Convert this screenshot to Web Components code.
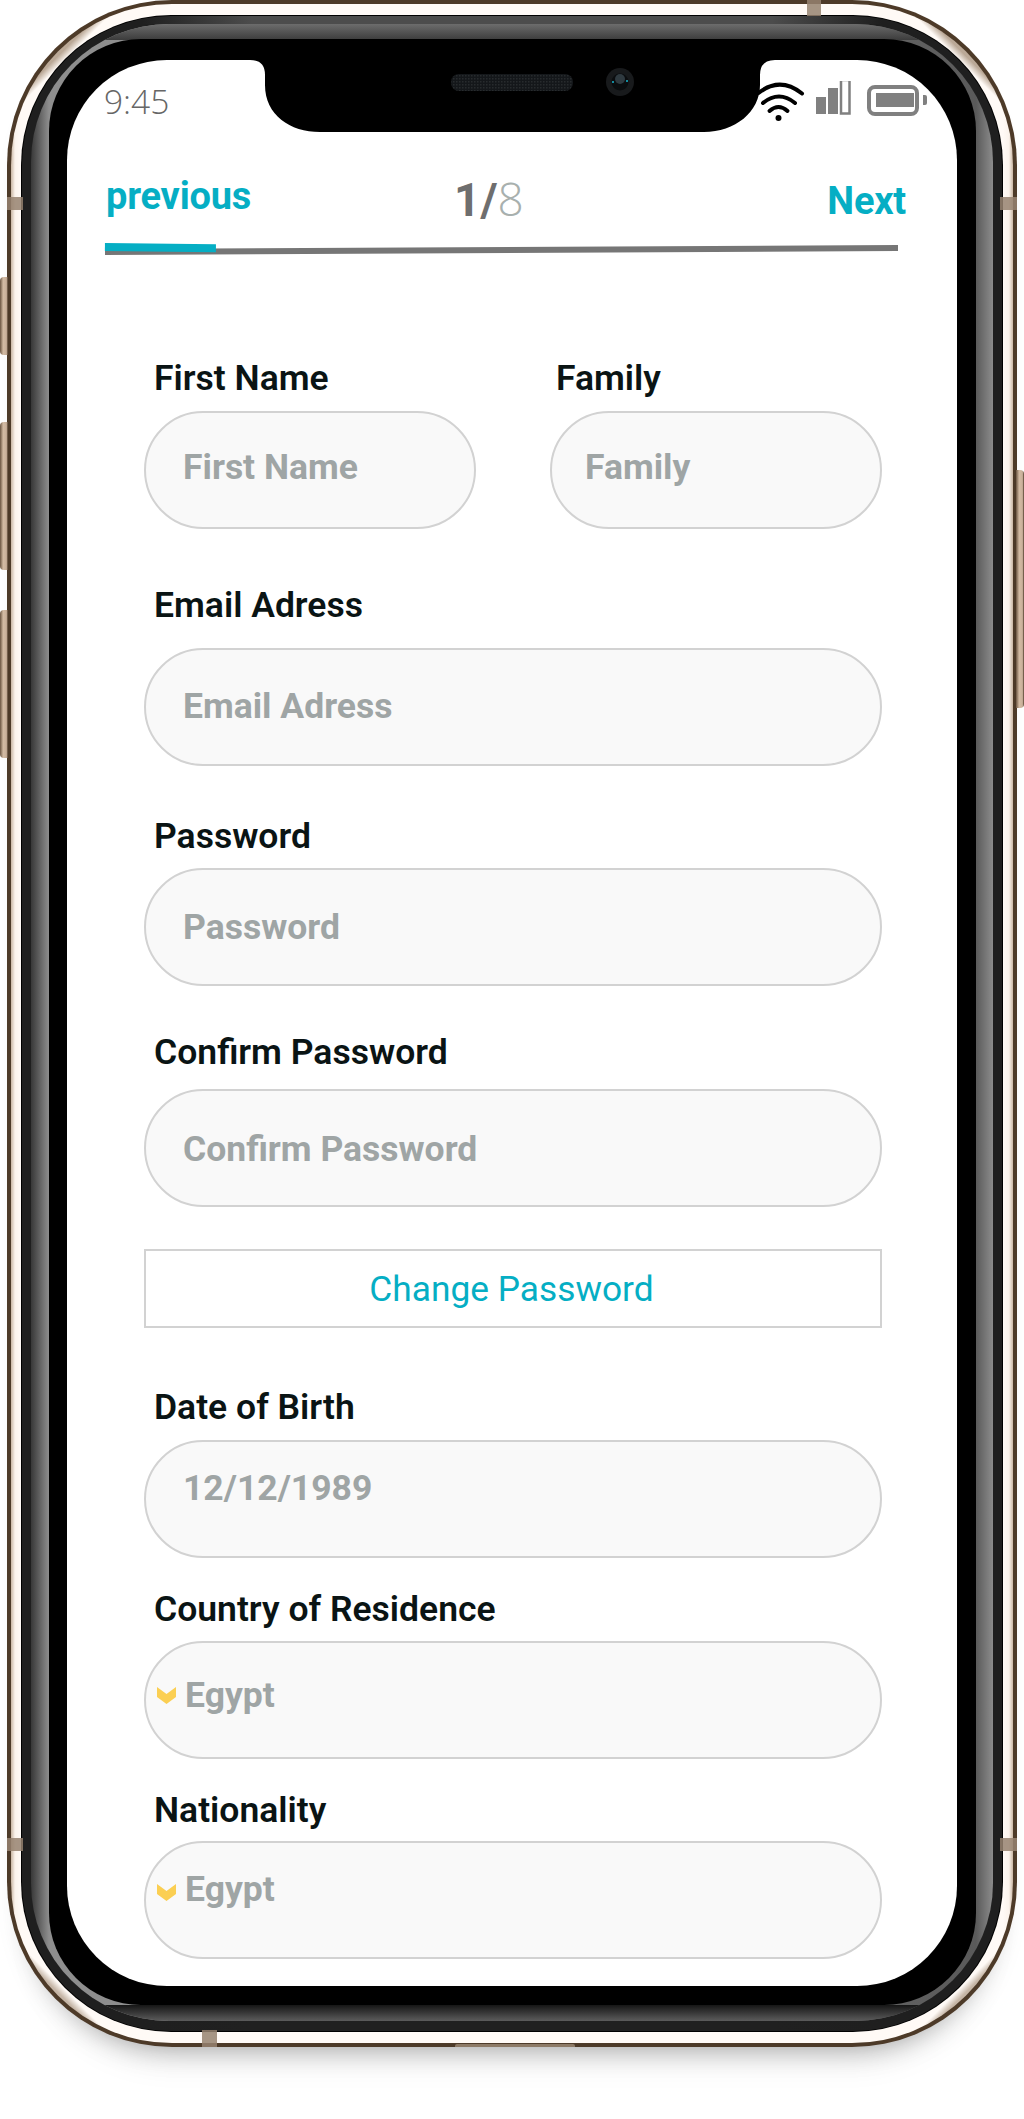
<!DOCTYPE html>
<html lang="en"><head><meta charset="utf-8"><title>Sign up</title>
<style>
html,body{margin:0;padding:0;background:#fff}
body{width:1024px;height:2119px;overflow:hidden;font-family:Roboto,"Liberation Sans",sans-serif}
.rows{display:flex;gap:74px}
</style></head><body>
<phone-frame>
  <status-bar></status-bar>
  <step-nav prev="previous" next="Next" current="1" total="8"></step-nav>
  <form-panel>
    <div class="rows">
      <form-field label="First Name" value="First Name" w="332" g="13" lx="10" px="37" pt="34"></form-field>
      <form-field label="Family" value="Family" w="332" g="13" lx="6" px="33" pt="34"></form-field>
    </div>
    <form-field label="Email Adress" value="Email Adress" w="738" mt="56" g="23" lx="10" px="37" pt="36"></form-field>
    <form-field label="Password" value="Password" w="738" mt="50" g="12" lx="10" px="37" pt="37"></form-field>
    <form-field label="Confirm Password" value="Confirm Password" w="738" mt="46" g="17" lx="10" px="37" pt="38"></form-field>
    <action-button>Change Password</action-button>
    <form-field label="Date of Birth" value="12/12/1989" w="738" mt="59" g="13" lx="10" px="37" pt="26"></form-field>
    <form-field label="Country of Residence" value="Egypt" select w="738" mt="31" g="12" lx="10" px="39" pt="32" cy="12"></form-field>
    <form-field label="Nationality" value="Egypt" select w="738" mt="31" g="11" lx="10" px="39" pt="26" cy="15"></form-field>
  </form-panel>
</phone-frame>
<script>
const tpl = html => { const t=document.createElement('template'); t.innerHTML=html; return t; };
class Base extends HTMLElement{
  mount(t){ this.attachShadow({mode:'open'}).appendChild(t.content.cloneNode(true)); }
}
const phoneT = tpl(`<style>
:host{display:block;position:relative;margin-left:7px;width:1010px}
.rim{position:relative;background:#4d3a28;padding:4px;border-radius:165px;box-shadow:0 22px 30px -24px rgba(0,0,0,.38),0 44px 36px -34px rgba(0,0,0,.1)}
.cream{padding:11px 10px 11px 10px;border-radius:161px;background:
 linear-gradient(135deg,transparent 56px,rgba(150,125,100,.65) 63px,rgba(150,125,100,.65) 70px,transparent 78px),
 linear-gradient(225deg,transparent 56px,rgba(150,125,100,.65) 63px,rgba(150,125,100,.65) 70px,transparent 78px),
 linear-gradient(45deg,transparent 58px,rgba(150,125,100,.55) 64px,rgba(150,125,100,.55) 69px,transparent 76px),
 linear-gradient(315deg,transparent 58px,rgba(150,125,100,.55) 64px,rgba(150,125,100,.55) 69px,transparent 76px),
 linear-gradient(90deg,#c9b6a3 0,#fbf3ec 4px,#fffaf6 10px,#fffaf6 calc(100% - 10px),#fbf3ec calc(100% - 4px),#c9b6a3 100%)}
.line{padding:1px;border-radius:150px;background:#000}
.dark{padding:8px 9px 10px 9px;border-radius:149px;background:
 linear-gradient(90deg,#1f1f1f 120px,transparent 230px,transparent calc(100% - 230px),#1f1f1f calc(100% - 120px)),
 linear-gradient(#4c4c4c 8px,#202020 8px)}
.grad{position:relative;overflow:hidden;padding:15px 17px 16px 18px;border-radius:138px;background:linear-gradient(90deg,#383838 0,#8e8e8e 18px,#8e8e8e 30%,#5a5a5a calc(100% - 17px),#8c8c8c 100%)}
.grad::before,.grad::after{content:"";position:absolute;left:0;right:0;height:16px}
.grad::before{top:0;background:linear-gradient(#6c6c6c,#3c3c3c);clip-path:polygon(40px 0,calc(100% - 40px) 0,calc(100% - 66px) 100%,68px 100%)}
.grad::after{bottom:0;background:linear-gradient(#161616,#5c5c5c);clip-path:polygon(68px 0,calc(100% - 66px) 0,calc(100% - 40px) 100%,40px 100%)}
.black{position:relative;z-index:1;background:#000;padding:21px 19px 19px 18px;border-radius:92px}
.screen{position:relative;background:#fff;border-radius:100px;overflow:hidden;height:1926px}
.notch{position:absolute;left:0;top:0;display:block}
.btn{position:absolute;width:8px;background:linear-gradient(90deg,#6a5440,#d3bba3 40%,#c9b09a 80%,#4d3a28);border-radius:3px}
.l{left:-7px;border-radius:4px 0 0 4px}.r{right:-7px;border-radius:0 4px 4px 0}
.band{position:absolute;background:rgba(150,130,112,.85)}
.slit{position:absolute;left:448px;width:120px;bottom:0;height:3px;border-radius:2px 2px 0 0;background:#8d7a66}
</style>
<div class="rim">
 <div class="cream"><div class="line"><div class="dark"><div class="grad"><div class="black"><div class="screen">
  <svg class="notch" width="889" height="80" viewBox="67 60 889 80"><defs><pattern id="mesh" width="3" height="3" patternUnits="userSpaceOnUse"><rect width="3" height="3" fill="#14171a"/><rect width="1.500" height="1.500" fill="#272b2d"/></pattern></defs><path fill="#000" d="M250,60Q265,60 265,75L265,85C265,115 290,132 320,132L704,132C735,132 760,112 760,85L760,75Q760,60 775,60Z"/><rect x="451" y="74" width="122" height="17" rx="8" fill="url(#mesh)"/><circle cx="620" cy="82" r="14" fill="#181a1c"/><circle cx="620" cy="82" r="8.500" fill="#0b0d0f"/><circle cx="620" cy="79" r="5" fill="#2f3a40"/><circle cx="613" cy="82" r="1" fill="#17b6cf"/><circle cx="627" cy="81" r="1" fill="#17b6cf"/></svg>
  <slot></slot>
 </div></div></div></div></div></div>
 <i class="band" style="left:0;top:197px;width:16px;height:13px"></i>
 <i class="band" style="right:0;top:197px;width:17px;height:13px"></i>
 <i class="band" style="left:800px;top:0;width:14px;height:16px"></i>
 <i class="band" style="left:195px;bottom:0;width:15px;height:17px"></i>
 <i class="band" style="left:0;top:1838px;width:16px;height:13px"></i>
 <i class="band" style="right:0;top:1838px;width:17px;height:13px"></i>
 <i class="slit"></i>
</div>
<i class="btn l" style="top:277px;height:78px"></i>
<i class="btn l" style="top:422px;height:148px"></i>
<i class="btn l" style="top:610px;height:148px"></i>
<i class="btn r" style="top:470px;height:238px"></i>`);
customElements.define('phone-frame',class extends Base{constructor(){super();this.mount(phoneT)}});

const statusT = tpl(`<style>
:host{display:flex;position:relative;z-index:1;height:59px;align-items:flex-start;padding:0 29px 0 37px}
.t{font:300 33.500px/38px "Open Sans",sans-serif;color:#666;margin-top:22px}
.icons{margin-left:auto;display:flex;margin-top:21px}
svg{display:block}
</style>
<span class="t">9:45</span>
<div class="icons">
<svg width="171" height="44" viewBox="758 84 171 44" fill="none">
 <g stroke="#000" stroke-width="4" stroke-linecap="round"><path d="M759.500,96Q781,79 803,96.500"/><path d="M764,106Q780,93 796,106"/><path d="M770.500,114Q779.500,106 788.500,114"/></g><circle cx="779.500" cy="121" r="3" fill="#000"/>
 <g fill="#808080"><rect x="817" y="100" width="10" height="17"/><rect x="829" y="91" width="10" height="26"/></g>
 <rect x="842" y="83" width="8.500" height="33.500" stroke="#808080" stroke-width="2.500"/>
 <rect x="870" y="90" width="48" height="27" rx="6" stroke="#808080" stroke-width="4"/>
 <rect x="877" y="96" width="38" height="14" fill="#808080"/>
 <path d="M924,98h2a2,2 0 0 1 2,2v6a2,2 0 0 1 -2,2h-2z" fill="#808080"/>
</svg></div>`);
customElements.define('status-bar',class extends Base{constructor(){super();this.mount(statusT)}});

const navT = tpl(`<style>
:host{display:block;height:137px;position:relative}
.top{display:flex;align-items:flex-start;padding:0 51px 0 39px;height:125px}
a{font:700 38px/41px Roboto,sans-serif;color:#05aec4;letter-spacing:-.2px}
.p{width:348px;margin-top:57px}
.n{margin-left:auto;margin-top:62px}
.f{margin-top:49px;font:300 46px/60px "Open Sans",sans-serif;color:#a8b0ae;white-space:nowrap}
b{font:700 46px/60px Roboto,sans-serif;color:#6e6e6e}
.bar{height:6px;width:793px;margin:3px 0 0 38px;background:#767676;transform:rotate(-.28deg);position:relative}
.bar i{position:absolute;left:0;top:-6px;width:111px;height:8px;background:#05aec4;transform:rotate(.9deg);transform-origin:0 0}
</style>
<div class="top"><a class="p"></a><span class="f"><b></b><span class="t"></span></span><a class="n"></a></div>
<div class="bar"><i></i></div>`);
customElements.define('step-nav',class extends Base{constructor(){super();this.mount(navT);const s=this.shadowRoot;
 s.querySelector('.p').textContent=this.getAttribute('prev');s.querySelector('.n').textContent=this.getAttribute('next');
 s.querySelector('b').textContent=this.getAttribute('current')+'/';s.querySelector('.t').textContent=this.getAttribute('total');}});

const panelT = tpl(`<style>:host{display:block;padding:0 0 0 77px;margin-top:102px;width:738px}</style><slot></slot>`);
customElements.define('form-panel',class extends Base{constructor(){super();this.mount(panelT)}});

const fieldT = tpl(`<style>
:host{display:block}
.l{height:40px;font:600 35.500px/40px Roboto,sans-serif;color:#0a1414;white-space:nowrap}
.b{box-sizing:border-box;height:118px;border:2px solid #d2d2d2;border-radius:59px;background:#f9f9f9;display:flex;align-items:flex-start;font:700 35.500px/40px Roboto,sans-serif;color:#9fa5a5}
svg{flex:none;margin:0 9px 0 11px}
</style><div class="l"></div><div class="b"><span class="v"></span></div>`);
customElements.define('form-field',class extends Base{constructor(){super();this.mount(fieldT);const s=this.shadowRoot,a=n=>this.getAttribute(n);
 const l=s.querySelector('.l'),b=s.querySelector('.b'),v=s.querySelector('.v');
 l.textContent=a('label');v.textContent=a('value');
 this.style.width=a('w')+'px';this.style.marginTop=(a('mt')||0)+'px';
 l.style.marginLeft=a('lx')+'px';l.style.marginBottom=a('g')+'px';
 b.style.paddingTop=a('pt')+'px';
 if(this.hasAttribute('select')){
  b.insertAdjacentHTML('afterbegin',`<svg width="19" height="17" viewBox="0 0 19 17" style="margin-top:${a('cy')}px"><path fill="#fbcf53" d="M0,0L9.500,7L19,0V10L9.500,17L0,10Z"/></svg>`);
 } else { v.style.marginLeft=a('px')+'px'; }
}});

const btnT = tpl(`<style>
:host{display:flex;box-sizing:border-box;margin-top:42px;height:79px;width:738px;padding-right:3px;border:2px solid #d2d2d2;align-items:center;justify-content:center;font:400 35.300px/40px Roboto,sans-serif;color:#05aec4}
</style><slot></slot>`);
customElements.define('action-button',class extends Base{constructor(){super();this.mount(btnT)}});
</script>
</body></html>
